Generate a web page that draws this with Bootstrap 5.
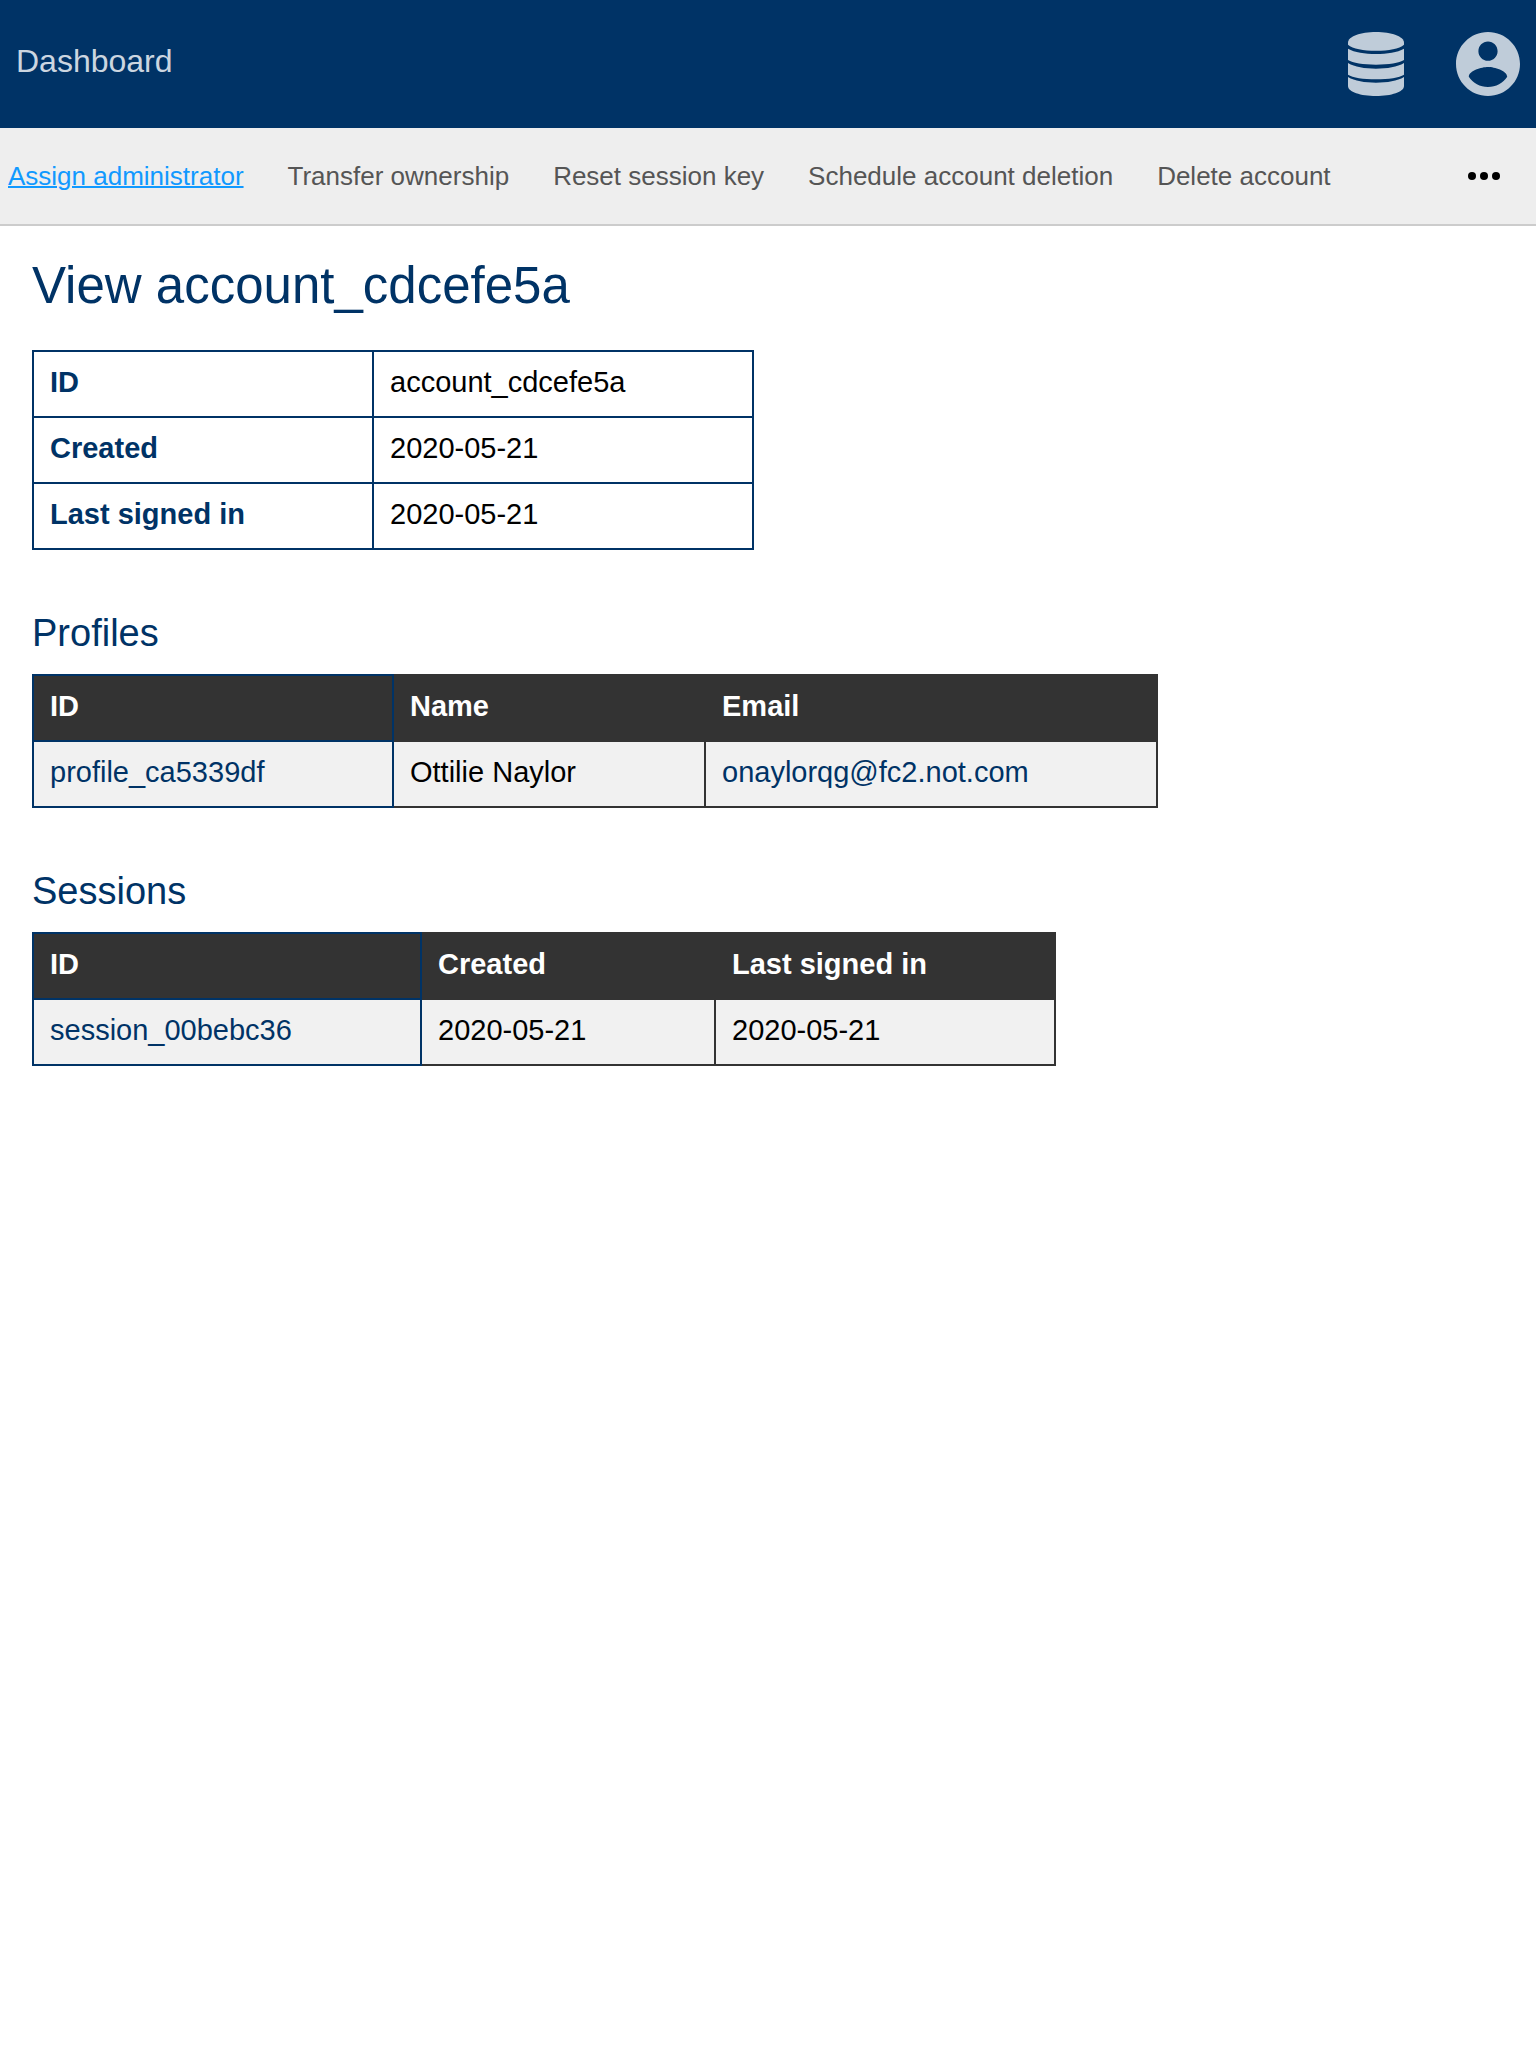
<!DOCTYPE html>
<html lang="en">
<head>
<meta charset="utf-8">
<meta name="viewport" content="width=device-width, initial-scale=1">
<title>Dashboard</title>
<link href="https://cdn.jsdelivr.net/npm/bootstrap@5.3.0/dist/css/bootstrap.min.css" rel="stylesheet">
<style>
body { font-family: "Liberation Sans", Arial, sans-serif; font-size: 29px; line-height: 32px; color: #000; background: #fff; }
.site-header { background: #003366; min-height: 128px; }
.site-title { color: #ccd6e0; font-size: 32px; line-height: 36px; padding-bottom: 6px; }
.site-icons { gap: 52px; }
.site-icons a { color: #bfccd9; }
.site-icons svg, .more-btn svg { display: block; fill: currentColor; }
.action-bar { background: #eee; border-bottom: 2px solid #ccc; min-height: 98px; font-size: 26px; }
.action-links { column-gap: 44px; padding: 0 8px; }
.action-links a { color: #555; text-decoration: none; }
.action-links a.active { color: #1199ff; text-decoration: underline; text-decoration-thickness: 2px; }
.more-btn { background: none; border: 0; padding: 16px; margin-right: 20px; color: #000; }
main { padding: 28px 32px; }
h1 { font-size: 51px; line-height: 64px; font-weight: 400; color: #003366; margin: 0 0 32px; }
h2 { font-size: 38px; line-height: 48px; font-weight: 400; color: #003366; margin: 0 0 17px; }
.data-table { border-collapse: collapse; margin-bottom: 59px; table-layout: fixed; }
.data-table th, .data-table td { border: 2px solid #333; padding: 14px 16px 18px; text-align: left; }
.data-table a { color: #003366; text-decoration: none; }
.data-table thead th { background: #333; color: #fff; }
.data-table tbody td { background: #f1f1f1; }
.data-table tr > :first-child { border-color: #003366; }
.detail-table tbody th, .detail-table tbody td { border-color: #003366; background: #fff; }
.detail-table tbody th { color: #003366; }
.col-340 { width: 340px; }
.col-380 { width: 380px; }
.col-360 { width: 360px; }
.col-312 { width: 312px; }
.col-452 { width: 452px; }
.col-388 { width: 388px; }
.col-294 { width: 294px; }
</style>
<script defer src="https://cdn.jsdelivr.net/npm/bootstrap@5.3.0/dist/js/bootstrap.bundle.min.js"></script>
</head>
<body>
<header class="site-header d-flex align-items-center justify-content-between px-3">
  <a class="site-title text-decoration-none" href="#">Dashboard</a>
  <div class="site-icons d-flex align-items-center">
    <a href="#" aria-label="Administration">
      <svg width="56" height="64" viewBox="0 0 168 192" aria-hidden="true">
        <path d="M0 32C0 13 38 0 84 0s84 13 84 32v6c-14 12-46 18-84 18S14 50 0 38z"/>
        <path d="M0 50c20 11 50 16 84 16s64-5 84-16v34c-14 9-46 14-84 14S14 93 0 84z"/>
        <path d="M0 93c20 12 50 17 84 17s64-5 84-17v35c-14 9-46 14-84 14S14 137 0 128z"/>
        <path d="M0 135c20 12 50 17 84 17s64-5 84-17v27c0 18-38 30-84 30S0 180 0 162z"/>
      </svg>
    </a>
    <a href="#" aria-label="Account">
      <svg width="64" height="64" viewBox="2 2 20 20" aria-hidden="true">
        <path d="M12 2C6.480 2 2 6.480 2 12s4.480 10 10 10 10-4.480 10-10S17.520 2 12 2zm0 3c1.660 0 3 1.340 3 3s-1.340 3-3 3-3-1.340-3-3 1.340-3 3-3zm0 14.200c-2.500 0-4.710-1.280-6-3.220.03-1.990 4-3.080 6-3.080 1.990 0 5.970 1.090 6 3.080-1.290 1.940-3.500 3.220-6 3.220z"/>
      </svg>
    </a>
  </div>
</header>

<nav class="action-bar d-flex align-items-center justify-content-between" aria-label="Account actions">
  <div class="action-links d-flex flex-wrap">
    <a class="active" href="#">Assign administrator</a>
    <a href="#">Transfer ownership</a>
    <a href="#">Reset session key</a>
    <a href="#">Schedule account deletion</a>
    <a href="#">Delete account</a>
  </div>
  <button class="more-btn" type="button" aria-label="More actions">
    <svg width="32" height="8" viewBox="0 0 32 8" aria-hidden="true"><circle cx="4" cy="4" r="4"/><circle cx="16" cy="4" r="4"/><circle cx="28" cy="4" r="4"/></svg>
  </button>
</nav>

<main>
  <h1>View account_cdcefe5a</h1>
  <table class="data-table detail-table">
    <colgroup><col class="col-340"><col class="col-380"></colgroup>
    <tbody>
      <tr><th scope="row">ID</th><td>account_cdcefe5a</td></tr>
      <tr><th scope="row">Created</th><td>2020-05-21</td></tr>
      <tr><th scope="row">Last signed in</th><td>2020-05-21</td></tr>
    </tbody>
  </table>

  <h2>Profiles</h2>
  <table class="data-table">
    <colgroup><col class="col-360"><col class="col-312"><col class="col-452"></colgroup>
    <thead><tr><th scope="col">ID</th><th scope="col">Name</th><th scope="col">Email</th></tr></thead>
    <tbody><tr><td><a href="#">profile_ca5339df</a></td><td>Ottilie Naylor</td><td><a href="#">onaylorqg@fc2.not.com</a></td></tr></tbody>
  </table>

  <h2>Sessions</h2>
  <table class="data-table">
    <colgroup><col class="col-388"><col class="col-294"><col class="col-340"></colgroup>
    <thead><tr><th scope="col">ID</th><th scope="col">Created</th><th scope="col">Last signed in</th></tr></thead>
    <tbody><tr><td><a href="#">session_00bebc36</a></td><td>2020-05-21</td><td>2020-05-21</td></tr></tbody>
  </table>
</main>
</body>
</html>
